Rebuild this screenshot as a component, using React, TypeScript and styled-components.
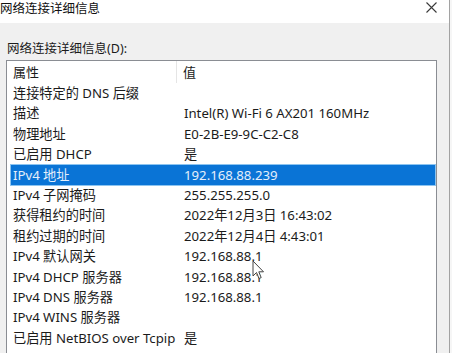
import React from "react";
import styled, { createGlobalStyle } from "styled-components";

const GlobalStyle = createGlobalStyle`
  html, body {
    margin: 0;
    padding: 0;
    overflow: hidden;
    background: #f6f6f6;
  }
  body {
    font-family: "Noto Sans", "Noto Sans CJK SC", sans-serif;
    color: #1b1b1b;
  }
`;

const rows: { name: string; value: string; selected?: boolean }[] = [
  { name: "连接特定的 DNS 后缀", value: "" },
  { name: "描述", value: "Intel(R) Wi-Fi 6 AX201 160MHz" },
  { name: "物理地址", value: "E0-2B-E9-9C-C2-C8" },
  { name: "已启用 DHCP", value: "是" },
  { name: "IPv4 地址", value: "192.168.88.239", selected: true },
  { name: "IPv4 子网掩码", value: "255.255.255.0" },
  { name: "获得租约的时间", value: "2022年12月3日 16:43:02" },
  { name: "租约过期的时间", value: "2022年12月4日 4:43:01" },
  { name: "IPv4 默认网关", value: "192.168.88.1" },
  { name: "IPv4 DHCP 服务器", value: "192.168.88.1" },
  { name: "IPv4 DNS 服务器", value: "192.168.88.1" },
  { name: "IPv4 WINS 服务器", value: "" },
  { name: "已启用 NetBIOS over Tcpip", value: "是" },
];

function App() {
  return (
    <>
      <GlobalStyle />
      <Window>
        <TitleBar>
          <Title>网络连接详细信息</Title>
          <CloseButton>
            <svg width="11" height="11" viewBox="0 0 11 11">
              <path d="M0.5 0.5 L10.5 10.5 M10.5 0.5 L0.5 10.5" stroke="#3a3a3a" strokeWidth="1.1" />
            </svg>
          </CloseButton>
        </TitleBar>
        <Body>
          <Label>网络连接详细信息(D):</Label>
          <ListBox>
            <HeaderRow>
              <HeaderCell $first>属性</HeaderCell>
              <HeaderCell>值</HeaderCell>
            </HeaderRow>
            {rows.map((r) => (
              <Row key={r.name} $selected={r.selected}>
                <Cell>{r.name}</Cell>
                <Cell>{r.value}</Cell>
              </Row>
            ))}
            <Cursor>
              <svg width="13" height="20" viewBox="0 0 13 20">
                <path
                  d="M1 1 L1 16 L4.5 12.5 L7 18.5 L9.2 17.6 L6.8 11.8 L11.5 11.8 Z"
                  fill="#ffffff"
                  stroke="#444"
                  strokeWidth="1"
                  strokeLinejoin="round"
                />
              </svg>
            </Cursor>
          </ListBox>
        </Body>
      </Window>
    </>
  );
}

const Window = styled.div`
  width: 449px;
  height: 353px;
  display: flex;
  flex-direction: column;
  background: #f0f0f0;
  border-right: 1px solid #a2a2a2;
  overflow: hidden;
`;

const TitleBar = styled.div`
  height: 23px;
  flex-shrink: 0;
  background: #ffffff;
  display: flex;
  justify-content: space-between;
  align-items: flex-start;
`;

const Title = styled.div`
  font-family: "Noto Sans CJK SC", sans-serif;
  font-size: 12.5px;
  line-height: 15px;
  color: #111;
`;

const CloseButton = styled.div`
  width: 11px;
  height: 11px;
  margin: 2px 12px 0 0;
  display: flex;
`;

const Body = styled.div`
  flex: 1;
  display: flex;
  flex-direction: column;
  padding: 18px 12px 0 6px;
  min-height: 0;
`;

const Label = styled.div`
  font-size: 12.5px;
  line-height: 16px;
  padding-left: 1px;
  margin-bottom: 3px;
`;

const ListBox = styled.div`
  position: relative;
  flex: 1;
  background: #ffffff;
  border: 1px solid #8a8d93;
  border-bottom: none;
  display: flex;
  flex-direction: column;
  overflow: hidden;
`;

const HeaderRow = styled.div`
  height: 22px;
  flex-shrink: 0;
  display: grid;
  grid-template-columns: 166px 1fr;
  margin-left: 4px;
`;

const HeaderCell = styled.div<{ $first?: boolean }>`
  font-size: 13px;
  line-height: 22px;
  padding-left: ${({ $first }) => ($first ? "2px" : "6px")};
  border-right: ${({ $first }) => ($first ? "1px solid #e5e5e5" : "none")};
`;

const Row = styled.div<{ $selected?: boolean }>`
  height: 20.4px;
  flex-shrink: 0;
  box-sizing: border-box;
  display: grid;
  grid-template-columns: 171px 1fr;
  margin: 0 1px 0 4px;
  background: ${({ $selected }) => ($selected ? "#0a74d6" : "transparent")};
  color: ${({ $selected }) => ($selected ? "#e4effb" : "#1b1b1b")};
  outline: ${({ $selected }) => ($selected ? "1px solid #8cc4f0" : "none")};
`;

const Cell = styled.div`
  font-size: 13.2px;
  line-height: 20.4px;
  padding-left: 2px;
  white-space: nowrap;
  overflow: hidden;
`;

const Cursor = styled.div`
  position: absolute;
  left: 245px;
  top: 199px;
  pointer-events: none;
`;

export default App;
